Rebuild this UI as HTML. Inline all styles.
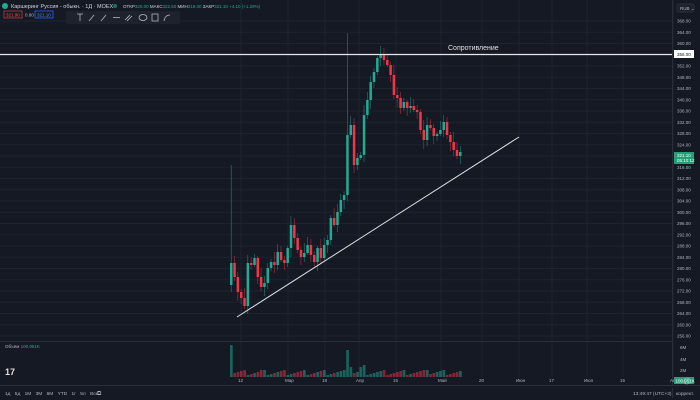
<!DOCTYPE html>
<html><head><meta charset="utf-8">
<style>
html,body{margin:0;padding:0;width:700px;height:400px;overflow:hidden;background:#151924;font-family:"Liberation Sans","Noto Sans CJK JP",sans-serif;}
svg{position:absolute;left:0;top:0}
text{font-family:"Liberation Sans","DejaVu Sans",sans-serif}
</style></head><body>
<svg id="s" width="700" height="400" xmlns="http://www.w3.org/2000/svg">
<rect width="700" height="400" fill="#151924"/>
<g id="grid" stroke="#1f2330" stroke-width="1"></g>
<g id="vol"></g>
<g id="cndl"></g>
<line x1="0" y1="54.5" x2="672" y2="54.5" stroke="#e8e8e8" stroke-width="1.2"/>
<text x="448" y="50" fill="#e0e0e0" font-size="7">Сопротивление</text>
<line x1="237" y1="317" x2="519" y2="137" stroke="#e0e0e0" stroke-width="1"/>
<line x1="0" y1="341.5" x2="672" y2="341.5" stroke="#2a2e39"/>
<line x1="672.5" y1="0" x2="672.5" y2="385" stroke="#2a2e39"/>
<line x1="0" y1="385.5" x2="700" y2="385.5" stroke="#2a2e39"/>
<g id="axis" fill="#b2b5be" font-size="4.5"></g>
<rect x="674" y="50" width="20" height="8" fill="#fff"/>
<text x="677" y="56" fill="#131722" font-size="4.5">356.00</text>
<rect x="674" y="152" width="20" height="12" fill="#22a077"/>
<text x="677" y="157" fill="#fff" font-size="4.5">321.10</text>
<text x="677" y="162" fill="#fff" font-size="4.5">05:10:12</text>
<rect x="674" y="377" width="20" height="7" fill="#22a077"/>
<text x="675.5" y="382.5" fill="#fff" font-size="4.5">100.951K</text>
<rect x="677" y="4" width="17" height="8" rx="2" fill="#1e222d" stroke="#2a2e39"/>
<text x="680" y="10" fill="#b2b5be" font-size="4.5">RUB ⌄</text>
<circle cx="5" cy="6" r="3" fill="#22ab94"/>
<text x="11" y="8" fill="#d1d4dc" font-size="5.5">Каршеринг Руссия - обыкн. · 1Д · MOEX</text>
<circle cx="115" cy="6" r="2" fill="#22ab94" opacity=".6"/>
<text x="123" y="8" font-size="4.5" fill="#d1d4dc">ОТКР<tspan fill="#22ab94">320.00</tspan> МАКС<tspan fill="#22ab94">322.60</tspan> МИН<tspan fill="#22ab94">319.00</tspan> ЗАКР<tspan fill="#22ab94">321.10 +4.10 (+1.29%)</tspan></text>
<rect x="4" y="11" width="18" height="7" fill="none" stroke="#c23a3a" stroke-width=".8"/>
<text x="6" y="16.5" fill="#f05b5b" font-size="4.5">321.90</text>
<text x="25" y="16.5" fill="#b2b5be" font-size="4.5">0.80</text>
<rect x="35" y="11" width="18" height="7" fill="none" stroke="#2962ff" stroke-width=".8"/>
<text x="37" y="16.5" fill="#5b8cff" font-size="4.5">321.10</text>
<rect x="66" y="11" width="114" height="13" rx="2" fill="#1e222d"/>
<g stroke="#b2b5be" stroke-width=".8" fill="none">
<path d="M77 14h6M80 14v7"/><path d="M89 21l5-6"/><path d="M101 21l5-6"/><path d="M113 17.5h7"/>
<path d="M125 20l5-5M127 21l5-5"/><ellipse cx="143" cy="17.5" rx="4" ry="3"/><rect x="152" y="14" width="6" height="7"/><path d="M164 21q1-6 6-6"/>
</g>
<text x="5" y="348" fill="#b2b5be" font-size="4.5">Объём <tspan fill="#22ab94">100.951K</tspan></text>
<text x="5" y="375" fill="#e0e0e0" font-size="9" font-weight="bold">17</text>
<text x="5" y="395" fill="#b2b5be" font-size="4.8" word-spacing="3">1д 5д 1М 3М 6М YTD 1г 5л Все</text>
<text x="97" y="395" fill="#b2b5be" font-size="6">⧉</text>
<text x="633" y="395" fill="#b2b5be" font-size="4.8">13:49:47 (UTC+3)</text>
<line x1="672.5" y1="388" x2="672.5" y2="398" stroke="#2a2e39"/>
<text x="676" y="395" fill="#b2b5be" font-size="4.8">коррект.</text>
<circle cx="687" cy="381" r="3" fill="none" stroke="#b2b5be" stroke-width=".6"/>
</svg>
<script>
(function(){
var NS="http://www.w3.org/2000/svg";
function el(p,t,a,txt){var e=document.createElementNS(NS,t);for(var k in a)e.setAttribute(k,a[k]);if(txt)e.textContent=txt;document.getElementById(p).appendChild(e);}
for(var p=368;p>=256;p-=4){var yy=21+(368-p)*2.8125;el('grid','line',{x1:0,y1:yy,x2:672,y2:yy});el('axis','text',{x:677,y:yy+1.5},p.toFixed(2));}
var times=[[241,'12'],[288,'Мар'],[325,'18'],[359,'Апр'],[396,'15'],[441,'Май'],[482,'20'],[519,'Июн'],[552,'17'],[587,'Июл'],[623,'15'],[673,'Авг']];
times.forEach(function(t){el('grid','line',{x1:t[0],y1:0,x2:t[0],y2:377});el('axis','text',{x:t[0]-3,y:382},t[1]);});
el('axis','text',{x:680,y:349},'6M');el('axis','text',{x:680,y:361},'4M');el('axis','text',{x:680,y:372},'2M');
var c=[285,263,277,292,298,306,263,265,258,277,287,283,268,262,265,252,260,263,248,225,238,250,257,253,245,255,262,248,258,245,240,218,225,212,200,195,135,125,165,158,155,115,100,82,72,58,55,60,65,75,95,98,108,102,108,106,110,112,130,140,125,128,136,134,130,122,135,142,150,156,152];
var x0=230,dx=3.32;
for(var i=1;i<c.length;i++){var o=c[i-1],cl=c[i];var up=cl<o;var col=up?'#22ab94':'#f23645';
var cx=x0+(i-1)*dx;var bt=Math.min(o,cl),bb=Math.max(o,cl);var h=Math.max(bb-bt,1.2);
var hi=bt-2-((i*7)%9),lo=bb+2+((i*5)%8);if(i==1)hi=165; if(i==36)hi=33;
el('cndl','line',{x1:cx+1.2,y1:hi,x2:cx+1.2,y2:lo,stroke:col,'stroke-width':.6,opacity:.7});
el('cndl','rect',{x:cx,y:bt,width:2.5,height:h,fill:col});
var vh=2+((i*13)%6);if(i==1)vh=32;if(i==36)vh=27;if(i==37||i==40)vh=10;if(i==41)vh=12;if(i==10)vh=7;if(i==60)vh=7;
el('vol','rect',{x:cx,y:377-vh,width:2.7,height:vh,fill:up?'#22ab94':'#f23645',opacity:.5});}
})();
</script>
</body></html>
